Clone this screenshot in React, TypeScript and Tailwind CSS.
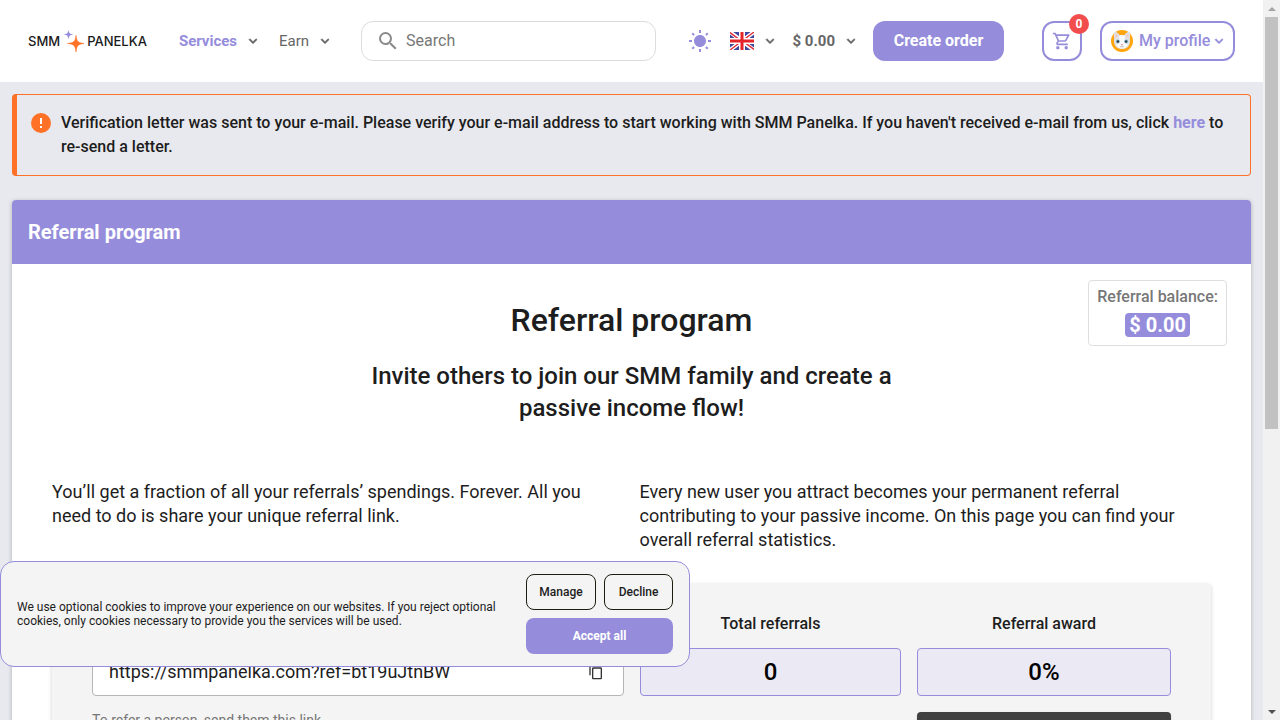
import type { ReactNode } from "react";
import { MdContentCopy, MdOutlineShoppingCart, MdSearch } from "react-icons/md";

function Logo() {
  return (
    <a href="#" className="flex items-center font-[Inter,sans-serif] text-[13px] font-medium leading-5 text-[#1a1a1a]">
      <span>SMM</span>
      <svg viewBox="0 0 24 24" className="ml-px mr-0.5 size-6" aria-hidden="true">
        <path
          d="M7.5 0.5 C8 4.2 8.8 5 12.500 5.500 C8.800 6 8 6.800 7.500 10.500 C7 6.800 6.200 6 2.500 5.500 C6.200 5 7 4.200 7.500 0.500Z"
          fill="#958ddb"
        />
        <path
          d="M15 6.500 C15.700 12.500 17 13.800 23 14.500 C17 15.200 15.700 16.500 15 23 C14.300 16.500 13 15.200 6.500 14.500 C13 13.800 14.300 12.500 15 6.500Z"
          stroke="#ff7126"
          strokeWidth="0.6"
          fill="#ff7126"
        />
      </svg>
      <span>PANELKA</span>
    </a>
  );
}

function Sun() {
  return (
    <svg viewBox="0 0 24 24" className="size-6" fill="currentColor" aria-hidden="true">
      <path d="M3.55 19.09L4.96 20.5L6.76 18.71L5.34 17.29M12 6C8.69 6 6 8.69 6 12S8.69 18 12 18 18 15.31 18 12C18 8.68 15.31 6 12 6M20 13H23V11H20M17.24 18.71L19.04 20.5L20.45 19.09L18.66 17.29M20.45 5L19.04 3.6L17.24 5.39L18.66 6.81M13 1H11V4H13M6.76 5.39L4.96 3.6L3.55 5L5.34 6.81L6.76 5.39M1 13H4V11H1M13 20H11V23H13" />
    </svg>
  );
}

function Flag() {
  return (
    <svg viewBox="0 0 24 18" className="h-[18px] w-6" aria-hidden="true">
      <path fill="#3f48a0" d="M0 0H24V18H0Z" />
      <path stroke="#fff" strokeWidth="4" d="M0 0L24 18M24 0L0 18" />
      <path stroke="#e3252b" strokeWidth="1.3" d="M0 0.6L12 9.6M24 17.4L12 8.4M24 0L12 9M0 18L12 9" />
      <path stroke="#fff" strokeWidth="6" d="M12 0V18M0 9H24" />
      <path stroke="#e3252b" strokeWidth="3" d="M12 0V18M0 9H24" />
    </svg>
  );
}

function CatAvatar() {
  return (
    <svg viewBox="0 0 22 22" className="size-[22px]" aria-hidden="true">
      <circle cx="11" cy="11" r="11" fill="#ffa50d" />
      <path fill="#dfe3e8" d="M3.5 1.5C5.5 2 7.5 3.3 8.5 5H13.500C14.500 3.300 16.500 2 18.500 1.500C19.300 4 19.300 7 18.800 9C20 14 17 19 11 19C5 19 2 14 3.200 9C2.700 7 2.700 4 3.500 1.500Z" />
      <path fill="#f4c8bf" d="M4.500 3.200L7.200 5.500L4.500 8.200ZM17.500 3.200L14.800 5.500L17.500 8.200Z" />
      <path fill="#f8f9fb" d="M8 6L11 5L14 6L13.500 12L17 15C15 18 13 18.500 11 18.500C9 18.500 7 18 5 15L8.500 12Z" />
      <circle cx="6.800" cy="11.500" r="2" fill="#8fb9c8" />
      <circle cx="15.200" cy="11.500" r="2" fill="#8fb9c8" />
      <circle cx="6.900" cy="11.500" r="1.200" fill="#29424f" />
      <circle cx="15.100" cy="11.500" r="1.200" fill="#29424f" />
      <path fill="#ef8e9a" d="M9.700 14H12.300L11 15.500Z" />
      <path stroke="#a7a0a5" strokeWidth="0.600" fill="none" d="M11 15.500V16.500M9 16.500Q10 17.500 11 16.500Q12 17.500 13 16.500" />
    </svg>
  );
}

function Chevron() {
  return (
    <svg viewBox="0 0 24 24" className="size-4 shrink-0" fill="currentColor" aria-hidden="true">
      <path
        d="M7.41 8.58L12 13.17L16.59 8.58L18 10L12 16L6 10L7.41 8.58Z"
        stroke="currentColor"
        strokeWidth="1"
      />
    </svg>
  );
}

function Header() {
  return (
    <header className="flex h-[82px] items-center bg-white pl-7 pr-7 text-[16px] leading-6 text-[#666]">
      <Logo />
      <nav className="ml-8 flex items-center gap-[18px]">
        <button className="flex items-center gap-2 text-[15px]">
          <span className="font-bold text-[#958ddb]">Services</span>
          <Chevron />
        </button>
        <button className="flex items-center gap-2 text-[15px]">
          Earn
          <Chevron />
        </button>
      </nav>
      <label className="ml-7 flex h-10 min-w-0 flex-1 items-center rounded-xl border border-[#dcdcdc] pl-3.5 pr-3">
        <MdSearch className="size-6 shrink-0 text-[#8a8a8a]" aria-hidden="true" />
        <input
          type="text"
          placeholder="Search"
          aria-label="Search"
          className="ml-1.5 min-w-0 flex-1 bg-transparent outline-none placeholder:text-[#777]"
        />
      </label>
      <button aria-label="Theme" className="ml-8 text-[#958ddb]">
        <Sun />
      </button>
      <button aria-label="Language" className="ml-[18px] flex items-center gap-2">
        <Flag />
        <Chevron />
      </button>
      <button className="ml-[14px] flex items-center gap-2 text-[15px] font-bold">
        $ 0.00
        <Chevron />
      </button>
      <button className="ml-[14px] h-10 w-[131px] rounded-xl bg-[#958ddb] font-bold text-white">Create order</button>
      <button
        aria-label="Cart"
        className="relative ml-[38px] flex size-10 items-center justify-center rounded-xl border-2 border-[#958ddb] text-[#958ddb]"
      >
        <MdOutlineShoppingCart className="size-5" aria-hidden="true" />
        <span className="absolute -right-[9px] -top-[9px] flex size-5 items-center justify-center rounded-full bg-[#f14d4d] text-[12px] font-bold leading-4 text-white">
          0
        </span>
      </button>
      <button className="ml-[18px] flex h-10 w-[135px] items-center rounded-xl border-2 border-[#958ddb] pl-[9px] font-medium text-[#958ddb]">
        <CatAvatar />
        <span className="ml-1.5 mr-px">My profile</span>
        <Chevron />
      </button>
    </header>
  );
}

function Alert() {
  return (
    <section className="flex gap-2.5 rounded border border-l-[5px] border-[#ff7126] py-4 pl-[14px] pr-4 text-[16px] font-medium leading-6">
      <svg viewBox="0 0 20 20" className="mt-0.5 size-5 shrink-0" aria-hidden="true">
        <circle cx="10" cy="10" r="10" fill="#ff7126" />
        <path fill="#fff" d="M9 5H11V11H9ZM9 13H11V15H9Z" />
      </svg>
      <p>
        Verification letter was sent to your e-mail. Please verify your e-mail address to start working with SMM
        Panelka. If you haven't received e-mail from us, click{" "}
        <a href="#" className="font-bold text-[#958ddb]">
          here
        </a>{" "}
        to re-send a letter.
      </p>
    </section>
  );
}

function Stat({ label, value, children }: { label: string; value: string; children?: ReactNode }) {
  return (
    <div>
      <h4 className="text-center text-[16px] font-medium leading-6">{label}</h4>
      <p className="mt-3 flex h-12 items-center justify-center rounded border border-[#958ddb] bg-[#ebe9f3] text-[24px] font-medium leading-8 text-black">
        {value}
      </p>
      {children}
    </div>
  );
}

function ReferralCard() {
  return (
    <section className="mt-6 rounded bg-white shadow-[0_1px_4px_rgba(0,0,0,0.25)]">
      <h1 className="flex h-16 items-center rounded-t bg-[#958ddb] px-4 text-[20px] font-bold leading-8 text-white">
        Referral program
      </h1>
      <div className="relative px-10 pb-10 pt-8">
        <div className="absolute right-6 top-4 flex flex-col items-center rounded border border-[#dedede] px-2 pb-2 pt-1 text-[16px] font-medium leading-6 text-[#777]">
          Referral balance:
          <span className="mt-1 rounded bg-[#958ddb] px-1 text-[20px] font-bold leading-6 text-white">$ 0.00</span>
        </div>
        <h2 className="text-center text-[32px] font-medium leading-12">Referral program</h2>
        <h3 className="mx-auto mt-4 max-w-[580px] text-center text-[24px] font-medium leading-8">
          Invite others to join our SMM family and create a passive income flow!
        </h3>
        <div className="mt-14 grid grid-cols-2 gap-4 text-[18px] leading-6">
          <p>
            You’ll get a fraction of all your referrals’ spendings. Forever. All you need to do is share your unique
            referral link.
          </p>
          <p>
            Every new user you attract becomes your permanent referral contributing to your passive income. On this
            page you can find your overall referral statistics.
          </p>
        </div>
        <div className="mt-8 grid grid-cols-[532fr_261fr_254fr] gap-4 rounded bg-[#f4f4f4] px-10 pb-10 pt-7 shadow-[0_1px_4px_rgba(0,0,0,0.18)]">
          <div className="pt-9">
            <div className="flex h-12 items-center rounded border border-[#b5b5b5] bg-white px-4">
              <input
                type="text"
                readOnly
                aria-label="Referral link"
                defaultValue="https://smmpanelka.com?ref=bt19uJtnBW"
                className="min-w-0 flex-1 bg-transparent text-[18px] leading-6 outline-none"
              />
              <button aria-label="Copy" className="mr-[3px] text-[#333]">
                <MdContentCopy className="size-4" aria-hidden="true" />
              </button>
            </div>
            <p className="mt-3 text-[14px] leading-6 text-[#777]">To refer a person, send them this link</p>
          </div>
          <Stat label="Total referrals" value="0" />
          <Stat label="Referral award" value="0%">
            <button aria-label="Withdraw" className="mt-4 h-12 w-full rounded bg-[#404040] shadow" />
          </Stat>
        </div>
      </div>
    </section>
  );
}

function CookieNotice() {
  return (
    <aside className="fixed bottom-[53px] left-0 flex w-[690px] max-w-full items-center rounded-[14px] border border-[#958ddb] bg-[#f4f4f4] px-4 py-3 text-[12px]">
      <p className="flex-1 pr-6 leading-[14px]">
        We use optional cookies to improve your experience on our websites. If you reject optional cookies, only
        cookies necessary to provide you the services will be used.
      </p>
      <div className="grid w-[147px] grid-cols-[70fr_69fr] gap-2 leading-4">
        <button className="h-9 rounded-lg border border-[#1d1d0f] font-medium">Manage</button>
        <button className="h-9 rounded-lg border border-[#1d1d0f] font-medium">Decline</button>
        <button className="col-span-2 h-9 rounded-lg bg-[#958ddb] font-bold text-white">Accept all</button>
      </div>
    </aside>
  );
}

function Scrollbar() {
  return (
    <div className="flex w-[17px] shrink-0 flex-col items-center bg-[#f1f1f1]" aria-hidden="true">
      <div className="flex h-[17px] items-center">
        <svg viewBox="0 0 8 4" className="h-1 w-2">
          <path d="M0 4L4 0L8 4Z" fill="#a3a3a3" />
        </svg>
      </div>
      <div className="flex w-full flex-1 flex-col px-0.5">
        <div className="basis-3/5 bg-[#c1c1c1]" />
      </div>
      <div className="flex h-[17px] items-center">
        <svg viewBox="0 0 8 4" className="h-1 w-2">
          <path d="M0 0L4 4L8 0Z" fill="#505050" />
        </svg>
      </div>
    </div>
  );
}

export default function App() {
  return (
    <div className="flex h-screen overflow-hidden bg-[#e8e9ee] font-[Roboto,sans-serif] text-[#1d1d1d]">
      <div className="min-w-0 flex-1 overflow-hidden">
        <Header />
        <main className="p-3">
          <Alert />
          <ReferralCard />
        </main>
      </div>
      <Scrollbar />
      <CookieNotice />
    </div>
  );
}
